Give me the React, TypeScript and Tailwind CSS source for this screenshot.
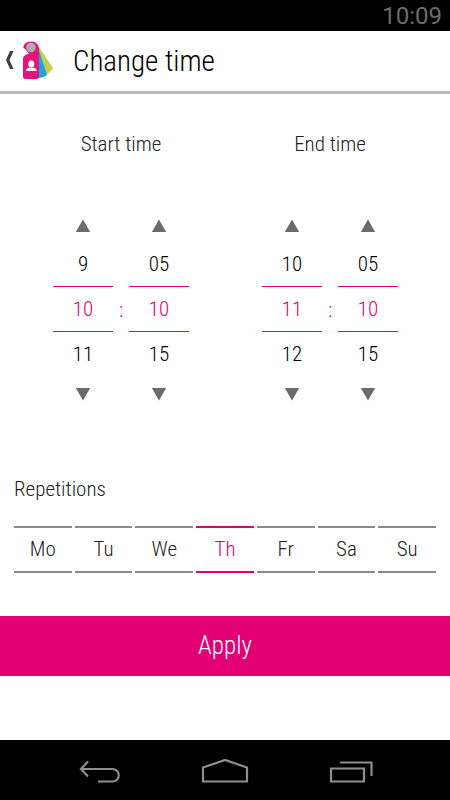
import React, { useState } from "react";
import clsx from "clsx";

const DAYS = ["Mo", "Tu", "We", "Th", "Fr", "Sa", "Su"];

const pad = (value: number) => String(value).padStart(2, "0");

interface SpinnerProps {
  label: string;
  value: number;
  step: number;
  max: number;
  format: (value: number) => string;
  onChange: (value: number) => void;
}

const Spinner: React.FC<SpinnerProps> = ({
  label,
  value,
  step,
  max,
  format,
  onChange,
}) => {
  const previous = (value - step + max) % max;
  const next = (value + step) % max;

  return (
    <div
      role="group"
      aria-label={label}
      className="flex w-15 flex-col items-center text-[21px] leading-11"
    >
      <button
        type="button"
        aria-label={`${label} down`}
        className="flex h-6 w-full items-center justify-center"
        onClick={() => onChange(previous)}
      >
        <svg width="16" height="14" viewBox="0 0 16 14" fill="#6b6b6b">
          <path d="M8 0.500 15.200 13H0.800z" />
        </svg>
      </button>
      <span className="mt-1">{format(previous)}</span>
      <span className="w-full border-y border-[#e20074] text-center text-[#e20074]">
        {format(value)}
      </span>
      <span>{format(next)}</span>
      <button
        type="button"
        aria-label={`${label} up`}
        className="mt-1.5 flex h-6 w-full items-center justify-center"
        onClick={() => onChange(next)}
      >
        <svg width="16" height="14" viewBox="0 0 16 14" fill="#6b6b6b">
          <path d="M0.800 1h14.400L8 13.500z" />
        </svg>
      </button>
    </div>
  );
};

interface TimePickerProps {
  title: string;
  initialHour: number;
  initialMinute: number;
}

const TimePicker: React.FC<TimePickerProps> = ({
  title,
  initialHour,
  initialMinute,
}) => {
  const [hour, setHour] = useState(initialHour);
  const [minute, setMinute] = useState(initialMinute);

  return (
    <section className="flex flex-col items-center">
      <h2 className="text-[21px] leading-6 text-[#222]">{title}</h2>
      <div className="mt-[58px] flex items-center">
        <Spinner
          label={`${title} hour`}
          value={hour}
          step={1}
          max={24}
          format={String}
          onChange={setHour}
        />
        <span className="w-4 text-center text-[21px] leading-11 text-[#e20074]">
          :
        </span>
        <Spinner
          label={`${title} minute`}
          value={minute}
          step={5}
          max={60}
          format={pad}
          onChange={setMinute}
        />
      </div>
    </section>
  );
};

const AppIcon = () => (
  <svg width="32" height="40" viewBox="0 0 32 40" aria-hidden="true">
    <path d="M17 6 31.300 27.500 24 34.500 16 30z" fill="#c3cf4d" />
    <path d="M16 6 25 34Q22 36.500 15 37z" fill="#1ba6dc" />
    <path
      d="M1.200 6.500Q2 0.500 9 0.500Q16.500 0.500 17 8V35.500Q17 38 14.500 38H3.500Q1 38 1 35.500V17.500Q1 15 3.500 14L7 12.500 3 8z"
      fill="#e6127d"
    />
    <circle cx="9" cy="6.500" r="4.800" fill="#a9afb4" />
    <ellipse cx="9.300" cy="23" rx="3" ry="3.600" fill="#fff" />
    <path d="M4 30Q4 27.200 7.500 26.800H11Q14.800 27.200 14.800 30z" fill="#fff" />
  </svg>
);

const App = () => {
  const [days, setDays] = useState<string[]>(["Th"]);

  const toggleDay = (day: string) => {
    setDays((current) =>
      current.includes(day)
        ? current.filter((item) => item !== day)
        : [...current, day]
    );
  };

  return (
    <div className="flex min-h-screen flex-col bg-white font-['Roboto_Condensed',Roboto,sans-serif] font-light text-black">
      {/* Status bar */}
      <div className="flex h-[31px] items-center justify-end bg-black pr-2 font-[Roboto,sans-serif] text-2xl font-normal text-[#6b6b6b]">
        10:09
      </div>

      <header className="flex h-[63px] items-center border-b-3 border-[#b8b8b8] pl-1">
        <button type="button" aria-label="Back" className="flex items-center">
          <svg width="12" height="22" viewBox="0 0 12 22" fill="#404040">
            <path d="M6 1H9.500L5.500 10 9.500 19H6L2 10z" />
          </svg>
          <span className="ml-1.5">
            <AppIcon />
          </span>
        </button>
        <h1 className="ml-[19px] text-[29px] leading-8">Change time</h1>
      </header>

      <main>
        <div className="flex justify-between pt-[38px] pr-[52px] pl-[53px]">
          <TimePicker title="Start time" initialHour={10} initialMinute={10} />
          <TimePicker title="End time" initialHour={11} initialMinute={10} />
        </div>

        <section className="mt-[71px] px-3.5">
          <h2 className="text-[21px] leading-6 text-[#222]">Repetitions</h2>
          <div className="mt-[25px] flex gap-[3px]">
            {DAYS.map((day) => {
              const selected = days.includes(day);
              return (
                <button
                  key={day}
                  type="button"
                  aria-pressed={selected}
                  className={clsx(
                    "h-[47px] flex-1 border-y-2 text-[21px]",
                    selected
                      ? "border-[#e20074] text-[#e20074]"
                      : "border-[#8a8a8a] text-[#222]"
                  )}
                  onClick={() => toggleDay(day)}
                >
                  {day}
                </button>
              );
            })}
          </div>
        </section>

        <button
          type="button"
          className="mt-[43px] h-15 w-full bg-[#e20074] text-[25px] text-white"
        >
          Apply
        </button>
      </main>

      {/* System navigation */}
      <nav className="mt-auto flex h-15 items-center justify-between bg-black px-[76px]">
        <button type="button" aria-label="Back">
          <svg width="48" height="30" viewBox="0 0 48 30" fill="none" stroke="#8f8f8f" strokeWidth="2.200">
            <path d="M12 6.500 5 14 12 21.500M5 14H36.500A6.200 6.200 0 0 1 36.500 26.500H22" />
          </svg>
        </button>
        <button type="button" aria-label="Home">
          <svg width="48" height="30" viewBox="0 0 48 30" fill="none" stroke="#8f8f8f" strokeWidth="2.200">
            <path d="M2 12.500 24 5 46 12.500V26.500H2z" />
          </svg>
        </button>
        <button type="button" aria-label="Recent apps">
          <svg width="48" height="30" viewBox="0 0 48 30" fill="none" stroke="#8f8f8f" strokeWidth="2.200">
            <path d="M5 13.500H38V26.500H5zM14 7.500H45.500V21" />
          </svg>
        </button>
      </nav>
    </div>
  );
};

export default App;
